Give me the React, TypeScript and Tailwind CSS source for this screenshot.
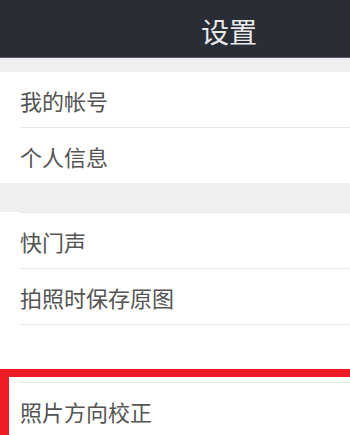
import React from "react";

const font = { fontFamily: '"Noto Sans CJK SC", "Noto Sans", sans-serif' };

const Row = ({ label, divider = true }: { label: string; divider?: boolean }) => (
  <div className="pl-5 bg-white">
    <div className={`h-[56px] flex items-center ${divider ? "border-b border-[#e6e6e8]" : ""}`}>
      <span className="text-[22px] leading-none text-[#545454]">{label}</span>
    </div>
  </div>
);

export default function App() {
  return (
    <div className="w-[350px] h-[435px] overflow-hidden bg-white" style={font}>
      <div className="h-[58px] bg-[#292d36] border-b border-[#5a5f69] pl-[201px] pt-[17px]">
        <span className="text-[28px] leading-none text-[#e9e9ea]">设置</span>
      </div>

      <div className="h-[14px] bg-[#efeff1]" />

      <Row label="我的帐号" />
      <div className="pl-5 bg-white">
        <div className="h-[55px] flex items-center">
          <span className="text-[22px] leading-none text-[#545454]">个人信息</span>
        </div>
      </div>

      <div className="h-[29px] bg-[#efeff1]" />

      <div className="pl-5 bg-white">
        <div className="border-t border-[#e6e6e8]" />
      </div>
      <Row label="快门声" />
      <Row label="拍照时保存原图" />

      <div className="h-[44px] bg-white" />

      <div className="border-t-[8px] border-l-[9px] border-[#ee1c25] bg-white pt-[5px]">
        <div className="ml-[11px] border-t border-[#e6e6e8]" />
        <div className="pl-[11px] h-[56px] flex items-center">
          <span className="text-[22px] leading-none text-[#545454]">照片方向校正</span>
        </div>
      </div>
    </div>
  );
}
